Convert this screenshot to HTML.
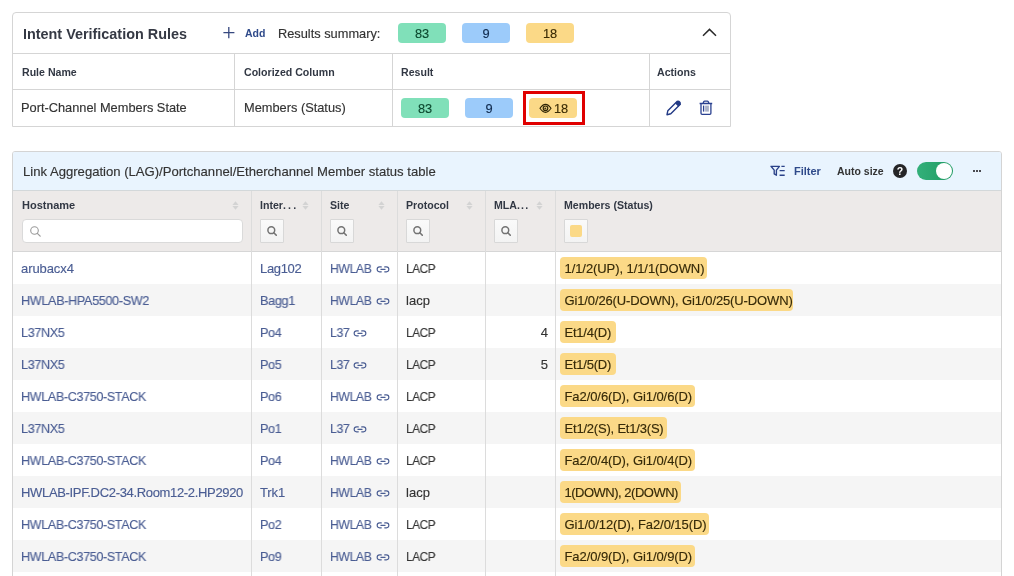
<!DOCTYPE html>
<html><head><meta charset="utf-8">
<style>
*{box-sizing:border-box;margin:0;padding:0}
html,body{width:1014px;height:576px;overflow:hidden;background:#fff}
body{position:relative;font-family:"Liberation Sans",sans-serif;color:#333;font-size:13px}
.a{position:absolute}
.t{position:absolute;white-space:nowrap;line-height:16px;will-change:transform;-webkit-text-stroke:0.15px}
.hl{position:absolute;height:1px}
.vl{position:absolute;width:1px}
.bd{position:absolute;will-change:transform;-webkit-text-stroke:0.15px;width:48px;height:20px;border-radius:4px;text-align:center;line-height:22px;font-size:12.8px}
.g{background:#80e0b9;color:#0d4a30}
.b{background:#9ccbfa;color:#0f2a4d}
.y{background:#fbd987;color:#3b2c05}
.th{font-weight:bold;font-size:10.6px;color:#323844;-webkit-text-stroke:0}
.lk{color:#4a5d93}
.sb{position:absolute;top:219px;width:24px;height:24px;border:1px solid #d8d8d8;border-radius:1px;background:linear-gradient(#fafafa,#f3f3f3)}
.sort{position:absolute;top:201px;width:7px;height:9px}
.row{position:absolute;left:13px;width:988px;height:32px}
.st{background:#f5f5f5}
.mb{position:absolute;will-change:transform;-webkit-text-stroke:0.15px;height:22px;line-height:24px;padding:0 4.5px;border-radius:4px;background:#fbd987;color:#362a08;font-size:13px;white-space:nowrap;left:560px}
</style></head>
<body>
<!-- CARD 1 -->
<div class="a" style="left:12px;top:12px;width:719px;height:115px;border:1px solid #d5d5d5;border-radius:4px 4px 0 0"></div>
<div class="hl" style="left:13px;top:53px;width:717px;background:#d5d5d5"></div>
<div class="hl" style="left:13px;top:89px;width:717px;background:#d5d5d5"></div>
<div class="vl" style="left:234px;top:54px;height:72px;background:#d5d5d5"></div>
<div class="vl" style="left:392px;top:54px;height:72px;background:#d5d5d5"></div>
<div class="vl" style="left:649px;top:54px;height:72px;background:#d5d5d5"></div>

<div class="t" style="left:23px;top:26px;font-weight:bold;font-size:14.4px;color:#353944;-webkit-text-stroke:0">Intent Verification Rules</div>
<svg class="a" style="left:223px;top:26px" width="12" height="13" viewBox="0 0 12 13"><path d="M5.8 1V12.2M0.4 6.6H11.4" stroke="#36487f" stroke-width="1.3" fill="none"/></svg>
<div class="t" style="left:245px;top:25px;font-weight:bold;font-size:10.5px;color:#2f4a8a;-webkit-text-stroke:0">Add</div>
<div class="t" style="left:278px;top:26px;font-size:12.8px;color:#333">Results summary:</div>
<div class="bd g" style="left:398px;top:23px">83</div>
<div class="bd b" style="left:462px;top:23px">9</div>
<div class="bd y" style="left:526px;top:23px">18</div>
<svg class="a" style="left:702px;top:28px" width="15" height="9" viewBox="0 0 15 9"><path d="M1 7.8L7.5 1.4L14 7.8" stroke="#2b2b2b" stroke-width="1.5" fill="none"/></svg>

<div class="t th" style="left:22px;top:64px">Rule Name</div>
<div class="t th" style="left:244px;top:64px">Colorized Column</div>
<div class="t th" style="left:401px;top:64px">Result</div>
<div class="t th" style="left:657px;top:64px">Actions</div>

<div class="t" style="left:21px;top:100px;font-size:12.8px">Port-Channel Members State</div>
<div class="t" style="left:244px;top:100px;font-size:12.8px">Members (Status)</div>
<div class="bd g" style="left:401px;top:98px">83</div>
<div class="bd b" style="left:465px;top:98px">9</div>
<div class="a" style="left:523px;top:91px;width:62px;height:34px;border:3px solid #e00000"></div>
<div class="bd y" style="left:529px;top:98px"><svg style="position:absolute;left:10px;top:5px" width="13" height="10" viewBox="0 0 13 10"><path d="M1 5.3Q3.6 1.3 6.5 1.3T12 5.3Q9.4 9.3 6.5 9.3T1 5.3Z" stroke="#2e2303" stroke-width="1.15" fill="none"/><circle cx="6.5" cy="5.3" r="2.3" stroke="#2e2303" stroke-width="1.15" fill="none"/><circle cx="6.3" cy="5.5" r="1" fill="#3a3010"/></svg><span style="position:absolute;left:25px;top:0">18</span></div>
<svg class="a" style="left:664px;top:98px" width="20" height="20" viewBox="0 0 20 20"><path d="M3 16.7L3.8 12.8L13.3 3.3L16.3 6.3L6.8 15.8Z" stroke="#233a85" stroke-width="1.4" fill="none" stroke-linejoin="round"/><path d="M11.2 5.4L13.4 3.2Q14.5 2.1 15.6 3.1L16.5 4Q17.5 5.1 16.4 6.2L14.2 8.4Z" fill="#233a85"/></svg>
<svg class="a" style="left:696px;top:98px" width="20" height="20" viewBox="0 0 20 20"><path d="M3.6 5.5H16.2M7.1 5.3L7.7 3.7Q8 3.1 8.7 3.1H11.3Q12 3.1 12.3 3.7L12.9 5.3M5 6V15.2Q5 16.3 6.1 16.3H13.8Q14.9 16.3 14.9 15.2V6" stroke="#2a4190" stroke-width="1.3" fill="none"/><path d="M7.6 7.6V13.6" stroke="#2a4190" stroke-width="1.3"/><rect x="9.1" y="7.6" width="3.8" height="6" fill="#aab2c8"/></svg>

<!-- CARD 2 -->
<div class="a" style="left:12px;top:151px;width:990px;height:440px;border:1px solid #d4d4d4;border-radius:3px;overflow:hidden">
  <div class="a" style="left:0;top:0;width:988px;height:39px;background:#e9f4fe;border-bottom:1px solid #d3d8da"></div>
  <div class="a" style="left:0;top:39px;width:988px;height:61px;background:#edeae9;border-bottom:1px solid #d6d6d6"></div>
</div>
<div class="t" style="left:23px;top:164px;font-size:13.1px;color:#333">Link Aggregation (LAG)/Portchannel/Etherchannel Member status table</div>
<svg class="a" style="left:766px;top:160px" width="24" height="22" viewBox="0 0 24 22"><path d="M5 6.3H13.4L10.4 10.1V15.2L8.2 13.9V10.1Z" stroke="#2a4188" stroke-width="1.35" fill="none" stroke-linejoin="round"/><path d="M15.4 6.3H18.7M13.6 10.6H18.7M13.6 15.2H18.7" stroke="#2a4188" stroke-width="1.35"/></svg>
<div class="t" style="left:794px;top:163px;font-weight:bold;font-size:11px;color:#2f4a8a;-webkit-text-stroke:0">Filter</div>
<div class="t" style="left:837px;top:163px;font-weight:bold;font-size:10.5px;color:#333;-webkit-text-stroke:0">Auto size</div>
<div class="a" style="left:893px;top:164px;width:14px;height:14px;border-radius:50%;background:#252527;color:#fff;font-weight:bold;font-size:10.5px;line-height:14px;text-align:center;will-change:transform">?</div>
<div class="a" style="left:917px;top:162px;width:36px;height:18px;border-radius:9px;background:linear-gradient(90deg,#33b07a,#1f9a62)"></div>
<div class="a" style="left:936px;top:163px;width:16px;height:16px;border-radius:50%;background:#fff"></div>
<div class="a" style="left:973px;top:170px;width:2px;height:2px;background:#4a4a50"></div>
<div class="a" style="left:976px;top:170px;width:2px;height:2px;background:#4a4a50"></div>
<div class="a" style="left:979px;top:170px;width:2px;height:2px;background:#4a4a50"></div>

<div class="row" style="top:252px"></div>
<div class="t lk" style="left:21px;top:261px;letter-spacing:-0.086px">arubacx4</div>
<div class="t lk" style="left:260px;top:261px;letter-spacing:-0.350px;transform:scaleX(0.9881);transform-origin:0 0">Lag102</div>
<div class="t lk" style="left:330px;top:261px;letter-spacing:-0.350px;transform:scaleX(0.9329);transform-origin:0 0">HWLAB</div>
<svg class="a" style="left:375.5px;top:266px" width="14" height="7" viewBox="0 0 14 7"><path d="M5.3 0.9H3.6A2.45 2.45 0 0 0 3.6 5.8H5.3M8.7 0.9H10.4A2.45 2.45 0 0 1 10.4 5.8H8.7M4.9 3.35H9.1" stroke="#4a5d93" stroke-width="1.15" fill="none" stroke-linecap="round"/></svg>
<div class="t" style="left:406px;top:261px;letter-spacing:-0.350px;transform:scaleX(0.8966);transform-origin:0 0">LACP</div>
<div class="mb" style="top:257px;width:147px;letter-spacing:-0.077px">1/1/2(UP), 1/1/1(DOWN)</div>
<div class="row st" style="top:284px"></div>
<div class="t lk" style="left:21px;top:293px;letter-spacing:-0.350px;transform:scaleX(0.9712);transform-origin:0 0">HWLAB-HPA5500-SW2</div>
<div class="t lk" style="left:260px;top:293px;letter-spacing:-0.350px;transform:scaleX(0.9765);transform-origin:0 0">Bagg1</div>
<div class="t lk" style="left:330px;top:293px;letter-spacing:-0.350px;transform:scaleX(0.9329);transform-origin:0 0">HWLAB</div>
<svg class="a" style="left:375.5px;top:298px" width="14" height="7" viewBox="0 0 14 7"><path d="M5.3 0.9H3.6A2.45 2.45 0 0 0 3.6 5.8H5.3M8.7 0.9H10.4A2.45 2.45 0 0 1 10.4 5.8H8.7M4.9 3.35H9.1" stroke="#4a5d93" stroke-width="1.15" fill="none" stroke-linecap="round"/></svg>
<div class="t" style="left:406px;top:293px;letter-spacing:0.035px">lacp</div>
<div class="mb" style="top:289px;width:233px;letter-spacing:-0.132px">Gi1/0/26(U-DOWN), Gi1/0/25(U-DOWN)</div>
<div class="row" style="top:316px"></div>
<div class="t lk" style="left:21px;top:325px;letter-spacing:-0.350px;transform:scaleX(0.9669);transform-origin:0 0">L37NX5</div>
<div class="t lk" style="left:260px;top:325px;letter-spacing:-0.350px;transform:scaleX(0.9687);transform-origin:0 0">Po4</div>
<div class="t lk" style="left:330px;top:325px;letter-spacing:-0.350px;transform:scaleX(0.9393);transform-origin:0 0">L37</div>
<svg class="a" style="left:353.4px;top:330px" width="14" height="7" viewBox="0 0 14 7"><path d="M5.3 0.9H3.6A2.45 2.45 0 0 0 3.6 5.8H5.3M8.7 0.9H10.4A2.45 2.45 0 0 1 10.4 5.8H8.7M4.9 3.35H9.1" stroke="#4a5d93" stroke-width="1.15" fill="none" stroke-linecap="round"/></svg>
<div class="t" style="left:406px;top:325px;letter-spacing:-0.350px;transform:scaleX(0.8966);transform-origin:0 0">LACP</div>
<div class="t" style="left:539px;top:325px;width:9px;text-align:right">4</div>
<div class="mb" style="top:321px;width:56px;letter-spacing:-0.219px">Et1/4(D)</div>
<div class="row st" style="top:348px"></div>
<div class="t lk" style="left:21px;top:357px;letter-spacing:-0.350px;transform:scaleX(0.9669);transform-origin:0 0">L37NX5</div>
<div class="t lk" style="left:260px;top:357px;letter-spacing:-0.350px;transform:scaleX(0.9687);transform-origin:0 0">Po5</div>
<div class="t lk" style="left:330px;top:357px;letter-spacing:-0.350px;transform:scaleX(0.9393);transform-origin:0 0">L37</div>
<svg class="a" style="left:353.4px;top:362px" width="14" height="7" viewBox="0 0 14 7"><path d="M5.3 0.9H3.6A2.45 2.45 0 0 0 3.6 5.8H5.3M8.7 0.9H10.4A2.45 2.45 0 0 1 10.4 5.8H8.7M4.9 3.35H9.1" stroke="#4a5d93" stroke-width="1.15" fill="none" stroke-linecap="round"/></svg>
<div class="t" style="left:406px;top:357px;letter-spacing:-0.350px;transform:scaleX(0.8966);transform-origin:0 0">LACP</div>
<div class="t" style="left:539px;top:357px;width:9px;text-align:right">5</div>
<div class="mb" style="top:353px;width:56px;letter-spacing:-0.219px">Et1/5(D)</div>
<div class="row" style="top:380px"></div>
<div class="t lk" style="left:21px;top:389px;letter-spacing:-0.350px;transform:scaleX(0.9643);transform-origin:0 0">HWLAB-C3750-STACK</div>
<div class="t lk" style="left:260px;top:389px;letter-spacing:-0.350px;transform:scaleX(0.9687);transform-origin:0 0">Po6</div>
<div class="t lk" style="left:330px;top:389px;letter-spacing:-0.350px;transform:scaleX(0.9329);transform-origin:0 0">HWLAB</div>
<svg class="a" style="left:375.5px;top:394px" width="14" height="7" viewBox="0 0 14 7"><path d="M5.3 0.9H3.6A2.45 2.45 0 0 0 3.6 5.8H5.3M8.7 0.9H10.4A2.45 2.45 0 0 1 10.4 5.8H8.7M4.9 3.35H9.1" stroke="#4a5d93" stroke-width="1.15" fill="none" stroke-linecap="round"/></svg>
<div class="t" style="left:406px;top:389px;letter-spacing:-0.350px;transform:scaleX(0.8966);transform-origin:0 0">LACP</div>
<div class="mb" style="top:385px;width:135px;letter-spacing:-0.078px">Fa2/0/6(D), Gi1/0/6(D)</div>
<div class="row st" style="top:412px"></div>
<div class="t lk" style="left:21px;top:421px;letter-spacing:-0.350px;transform:scaleX(0.9669);transform-origin:0 0">L37NX5</div>
<div class="t lk" style="left:260px;top:421px;letter-spacing:-0.350px;transform:scaleX(0.9687);transform-origin:0 0">Po1</div>
<div class="t lk" style="left:330px;top:421px;letter-spacing:-0.350px;transform:scaleX(0.9393);transform-origin:0 0">L37</div>
<svg class="a" style="left:353.4px;top:426px" width="14" height="7" viewBox="0 0 14 7"><path d="M5.3 0.9H3.6A2.45 2.45 0 0 0 3.6 5.8H5.3M8.7 0.9H10.4A2.45 2.45 0 0 1 10.4 5.8H8.7M4.9 3.35H9.1" stroke="#4a5d93" stroke-width="1.15" fill="none" stroke-linecap="round"/></svg>
<div class="t" style="left:406px;top:421px;letter-spacing:-0.350px;transform:scaleX(0.8966);transform-origin:0 0">LACP</div>
<div class="mb" style="top:417px;width:107px;letter-spacing:-0.201px">Et1/2(S), Et1/3(S)</div>
<div class="row" style="top:444px"></div>
<div class="t lk" style="left:21px;top:453px;letter-spacing:-0.350px;transform:scaleX(0.9643);transform-origin:0 0">HWLAB-C3750-STACK</div>
<div class="t lk" style="left:260px;top:453px;letter-spacing:-0.350px;transform:scaleX(0.9687);transform-origin:0 0">Po4</div>
<div class="t lk" style="left:330px;top:453px;letter-spacing:-0.350px;transform:scaleX(0.9329);transform-origin:0 0">HWLAB</div>
<svg class="a" style="left:375.5px;top:458px" width="14" height="7" viewBox="0 0 14 7"><path d="M5.3 0.9H3.6A2.45 2.45 0 0 0 3.6 5.8H5.3M8.7 0.9H10.4A2.45 2.45 0 0 1 10.4 5.8H8.7M4.9 3.35H9.1" stroke="#4a5d93" stroke-width="1.15" fill="none" stroke-linecap="round"/></svg>
<div class="t" style="left:406px;top:453px;letter-spacing:-0.350px;transform:scaleX(0.8966);transform-origin:0 0">LACP</div>
<div class="mb" style="top:449px;width:135px;letter-spacing:-0.078px">Fa2/0/4(D), Gi1/0/4(D)</div>
<div class="row st" style="top:476px"></div>
<div class="t lk" style="left:21px;top:485px;letter-spacing:-0.333px">HWLAB-IPF.DC2-34.Room12-2.HP2920</div>
<div class="t lk" style="left:260px;top:485px;letter-spacing:-0.133px">Trk1</div>
<div class="t lk" style="left:330px;top:485px;letter-spacing:-0.350px;transform:scaleX(0.9329);transform-origin:0 0">HWLAB</div>
<svg class="a" style="left:375.5px;top:490px" width="14" height="7" viewBox="0 0 14 7"><path d="M5.3 0.9H3.6A2.45 2.45 0 0 0 3.6 5.8H5.3M8.7 0.9H10.4A2.45 2.45 0 0 1 10.4 5.8H8.7M4.9 3.35H9.1" stroke="#4a5d93" stroke-width="1.15" fill="none" stroke-linecap="round"/></svg>
<div class="t" style="left:406px;top:485px;letter-spacing:0.035px">lacp</div>
<div class="mb" style="top:481px;width:121px;letter-spacing:-0.494px">1(DOWN), 2(DOWN)</div>
<div class="row" style="top:508px"></div>
<div class="t lk" style="left:21px;top:517px;letter-spacing:-0.350px;transform:scaleX(0.9643);transform-origin:0 0">HWLAB-C3750-STACK</div>
<div class="t lk" style="left:260px;top:517px;letter-spacing:-0.350px;transform:scaleX(0.9687);transform-origin:0 0">Po2</div>
<div class="t lk" style="left:330px;top:517px;letter-spacing:-0.350px;transform:scaleX(0.9329);transform-origin:0 0">HWLAB</div>
<svg class="a" style="left:375.5px;top:522px" width="14" height="7" viewBox="0 0 14 7"><path d="M5.3 0.9H3.6A2.45 2.45 0 0 0 3.6 5.8H5.3M8.7 0.9H10.4A2.45 2.45 0 0 1 10.4 5.8H8.7M4.9 3.35H9.1" stroke="#4a5d93" stroke-width="1.15" fill="none" stroke-linecap="round"/></svg>
<div class="t" style="left:406px;top:517px;letter-spacing:-0.350px;transform:scaleX(0.8966);transform-origin:0 0">LACP</div>
<div class="mb" style="top:513px;width:149px;letter-spacing:-0.076px">Gi1/0/12(D), Fa2/0/15(D)</div>
<div class="row st" style="top:540px"></div>
<div class="t lk" style="left:21px;top:549px;letter-spacing:-0.350px;transform:scaleX(0.9643);transform-origin:0 0">HWLAB-C3750-STACK</div>
<div class="t lk" style="left:260px;top:549px;letter-spacing:-0.350px;transform:scaleX(0.9687);transform-origin:0 0">Po9</div>
<div class="t lk" style="left:330px;top:549px;letter-spacing:-0.350px;transform:scaleX(0.9329);transform-origin:0 0">HWLAB</div>
<svg class="a" style="left:375.5px;top:554px" width="14" height="7" viewBox="0 0 14 7"><path d="M5.3 0.9H3.6A2.45 2.45 0 0 0 3.6 5.8H5.3M8.7 0.9H10.4A2.45 2.45 0 0 1 10.4 5.8H8.7M4.9 3.35H9.1" stroke="#4a5d93" stroke-width="1.15" fill="none" stroke-linecap="round"/></svg>
<div class="t" style="left:406px;top:549px;letter-spacing:-0.350px;transform:scaleX(0.8966);transform-origin:0 0">LACP</div>
<div class="mb" style="top:545px;width:135px;letter-spacing:-0.078px">Fa2/0/9(D), Gi1/0/9(D)</div>
<div class="vl" style="left:251px;top:191px;height:385px;background:#dcdcdc"></div>
<div class="vl" style="left:321px;top:191px;height:385px;background:#dcdcdc"></div>
<div class="vl" style="left:397px;top:191px;height:385px;background:#dcdcdc"></div>
<div class="vl" style="left:485px;top:191px;height:385px;background:#dcdcdc"></div>
<div class="vl" style="left:555px;top:191px;height:385px;background:#dcdcdc"></div>

<div class="t th" style="left:22px;top:197px;font-size:11px">Hostname</div>
<div class="t th" style="left:260px;top:197px">Inter<span style="letter-spacing:2.2px">...</span></div>
<div class="t th" style="left:330px;top:197px">Site</div>
<div class="t th" style="left:406px;top:197px">Protocol</div>
<div class="t th" style="left:494px;top:197px">MLA<span style="letter-spacing:1.2px">...</span></div>
<div class="t th" style="left:564px;top:197px">Members (Status)</div>
<svg class="sort" style="left:232px" viewBox="0 0 7 9"><path d="M3.5 0.3L6.6 3.9H0.4Z M0.4 5.1H6.6L3.5 8.7Z" fill="#d3d3d3"/></svg>
<svg class="sort" style="left:302px" viewBox="0 0 7 9"><path d="M3.5 0.3L6.6 3.9H0.4Z M0.4 5.1H6.6L3.5 8.7Z" fill="#d3d3d3"/></svg>
<svg class="sort" style="left:378px" viewBox="0 0 7 9"><path d="M3.5 0.3L6.6 3.9H0.4Z M0.4 5.1H6.6L3.5 8.7Z" fill="#d3d3d3"/></svg>
<svg class="sort" style="left:466px" viewBox="0 0 7 9"><path d="M3.5 0.3L6.6 3.9H0.4Z M0.4 5.1H6.6L3.5 8.7Z" fill="#d3d3d3"/></svg>
<svg class="sort" style="left:536px" viewBox="0 0 7 9"><path d="M3.5 0.3L6.6 3.9H0.4Z M0.4 5.1H6.6L3.5 8.7Z" fill="#d3d3d3"/></svg>
<div class="a" style="left:22px;top:219px;width:221px;height:24px;border:1px solid #dadada;border-radius:4px;background:#fff"></div>
<svg class="a" style="left:30px;top:226px" width="11" height="11" viewBox="0 0 11 11"><circle cx="4.5" cy="4.5" r="3.8" stroke="#9a9a9a" stroke-width="1.1" fill="none"/><path d="M7.3 7.3L10.2 10.2" stroke="#9a9a9a" stroke-width="1.2" stroke-linecap="round"/></svg>
<div class="sb" style="left:260px"><svg style="position:absolute;left:6px;top:6px" width="10" height="10" viewBox="0 0 10 10"><circle cx="4.3" cy="4.2" r="3.4" stroke="#737373" stroke-width="1.5" fill="none"/><path d="M6.8 6.7L9.3 9.2" stroke="#737373" stroke-width="1.6" stroke-linecap="round"/></svg></div>
<div class="sb" style="left:330px"><svg style="position:absolute;left:6px;top:6px" width="10" height="10" viewBox="0 0 10 10"><circle cx="4.3" cy="4.2" r="3.4" stroke="#737373" stroke-width="1.5" fill="none"/><path d="M6.8 6.7L9.3 9.2" stroke="#737373" stroke-width="1.6" stroke-linecap="round"/></svg></div>
<div class="sb" style="left:406px"><svg style="position:absolute;left:6px;top:6px" width="10" height="10" viewBox="0 0 10 10"><circle cx="4.3" cy="4.2" r="3.4" stroke="#737373" stroke-width="1.5" fill="none"/><path d="M6.8 6.7L9.3 9.2" stroke="#737373" stroke-width="1.6" stroke-linecap="round"/></svg></div>
<div class="sb" style="left:494px"><svg style="position:absolute;left:6px;top:6px" width="10" height="10" viewBox="0 0 10 10"><circle cx="4.3" cy="4.2" r="3.4" stroke="#737373" stroke-width="1.5" fill="none"/><path d="M6.8 6.7L9.3 9.2" stroke="#737373" stroke-width="1.6" stroke-linecap="round"/></svg></div>
<div class="sb" style="left:564px"><div style="position:absolute;left:5px;top:5px;width:12px;height:12px;border-radius:2px;background:#fbd987"></div></div>
</body></html>
